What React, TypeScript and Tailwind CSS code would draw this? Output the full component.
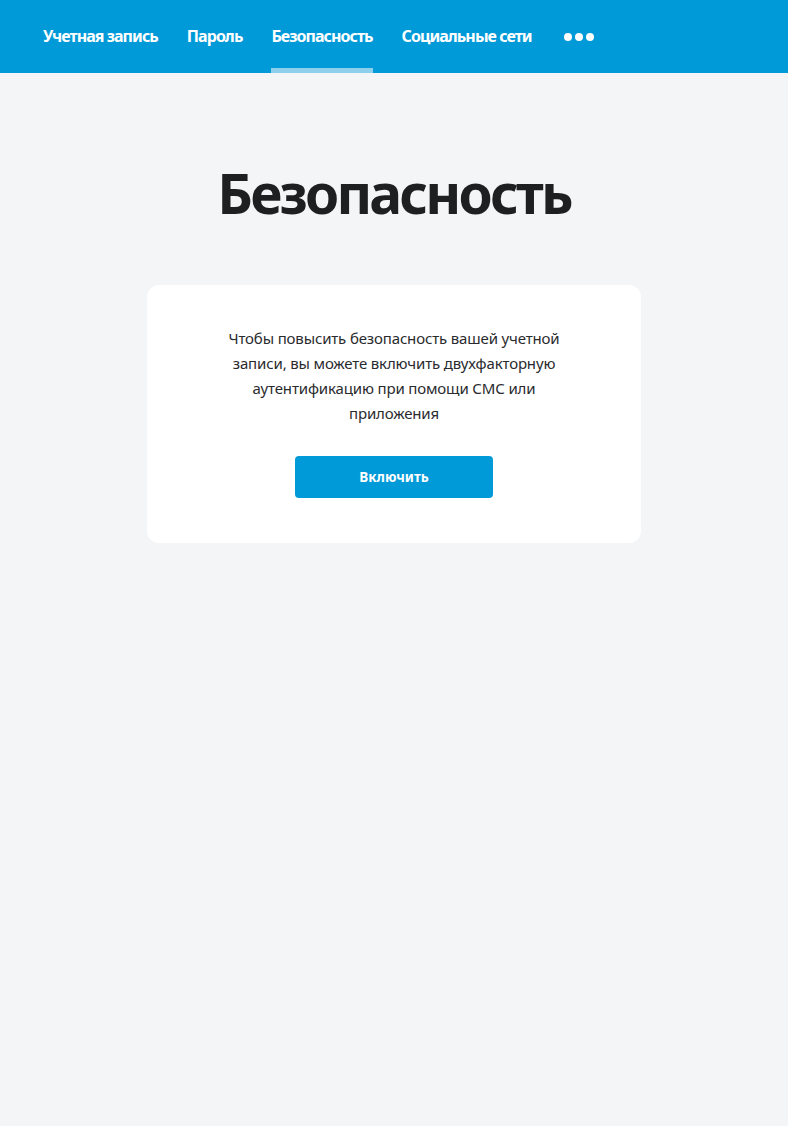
import React from "react";

const navItems = ["Учетная запись", "Пароль", "Безопасность", "Социальные сети"];

export default function App() {
  return (
    <div className="min-h-[1126px] bg-[#f4f5f7]" style={{ fontFamily: '"Noto Sans", "Open Sans", sans-serif' }}>
      <header className="h-[73px] bg-[#009ad9] flex items-stretch pl-[43px]">
        <nav className="flex items-stretch gap-[29px]">
          {navItems.map((item) => (
            <div key={item} className="relative flex items-center">
              <span className="text-white text-[16px] font-bold tracking-[-0.95px] leading-none pb-[1px]">{item}</span>
              {item === "Безопасность" && (
                <span className="absolute left-0 right-0 bottom-0 h-[5px] bg-[#8dd0ee]" />
              )}
            </div>
          ))}
          <div className="flex items-center gap-[3px] pl-[3px]">
            <span className="w-[8px] h-[8px] rounded-full bg-white" />
            <span className="w-[8px] h-[8px] rounded-full bg-white" />
            <span className="w-[8px] h-[8px] rounded-full bg-white" />
          </div>
        </nav>
      </header>
      <main className="flex flex-col items-center">
        <h1 className="mt-[88px] text-[55px] leading-[64px] font-bold text-[#1e1f21] tracking-[-2.8px]">Безопасность</h1>
        <section className="mt-[60px] w-[494px] bg-white rounded-[12px] flex flex-col items-center pt-[41px] pb-[45px]">
          <p className="w-[340px] text-center text-[15px] leading-[25px] tracking-[-0.15px] text-[#2a2b2e]">
            Чтобы повысить безопасность вашей учетной записи, вы можете включить двухфакторную аутентификацию при помощи СМС или приложения
          </p>
          <button className="mt-[30px] w-[198px] h-[42px] rounded-[4px] bg-[#009ad9] text-white text-[13.5px] font-bold">
            Включить
          </button>
        </section>
      </main>
    </div>
  );
}
